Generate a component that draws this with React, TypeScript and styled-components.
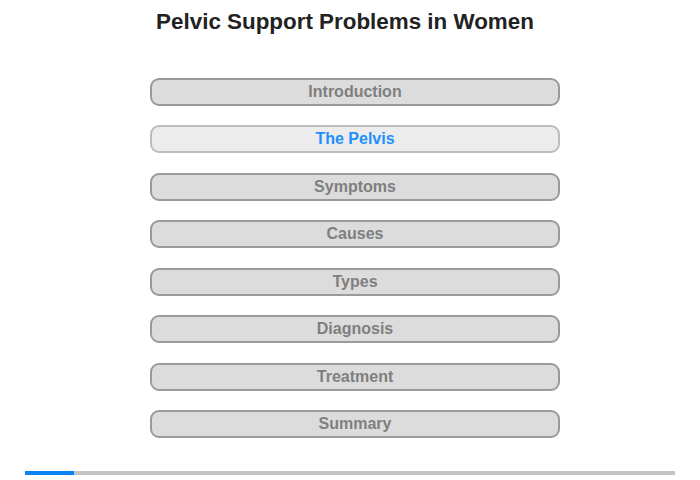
import React from "react";
import styled, { createGlobalStyle } from "styled-components";

const Global = createGlobalStyle`
  html, body { margin: 0; padding: 0; background: #fff; }
  body { font-family: "Liberation Sans", Arial, sans-serif; }
`;

const Page = styled.div`
  width: 700px;
  height: 480px;
  display: flex;
  flex-direction: column;
  align-items: center;
  box-sizing: border-box;
`;

const Title = styled.h1`
  margin: 8px 0 0 -10px;
  font-size: 22.4px;
  line-height: 28px;
  font-weight: bold;
  color: #222;
`;

const Menu = styled.nav`
  margin-top: 42px;
  margin-left: 10px;
  display: flex;
  flex-direction: column;
  gap: 19.43px;
`;

const MenuButton = styled.div<{ $active?: boolean }>`
  width: 410px;
  height: 28px;
  box-sizing: border-box;
  border: 2px solid ${(p) => (p.$active ? "#bcbcbc" : "#9a9a9a")};
  border-radius: 9px;
  background: ${(p) => (p.$active ? "#ececec" : "#dcdcdc")};
  color: ${(p) => (p.$active ? "#1e90ff" : "#7f7f7f")};
  font-size: 16px;
  font-weight: bold;
  display: flex;
  align-items: center;
  justify-content: center;
  line-height: 1;
`;

const Progress = styled.div`
  margin-top: auto;
  margin-bottom: 5px;
  width: 650px;
  height: 4px;
  background: #c4c4c4;
  display: flex;
`;

const ProgressFill = styled.div`
  height: 100%;
  background: #0a84f4;
`;

const items = [
  "Introduction",
  "The Pelvis",
  "Symptoms",
  "Causes",
  "Types",
  "Diagnosis",
  "Treatment",
  "Summary",
];

export default function App() {
  return (
    <Page>
      <Global />
      <Title>Pelvic Support Problems in Women</Title>
      <Menu>
        {items.map((t) => (
          <MenuButton key={t} $active={t === "The Pelvis"}>
            {t}
          </MenuButton>
        ))}
      </Menu>
      <Progress>
        <ProgressFill style={{ width: "49px" }} />
      </Progress>
    </Page>
  );
}
